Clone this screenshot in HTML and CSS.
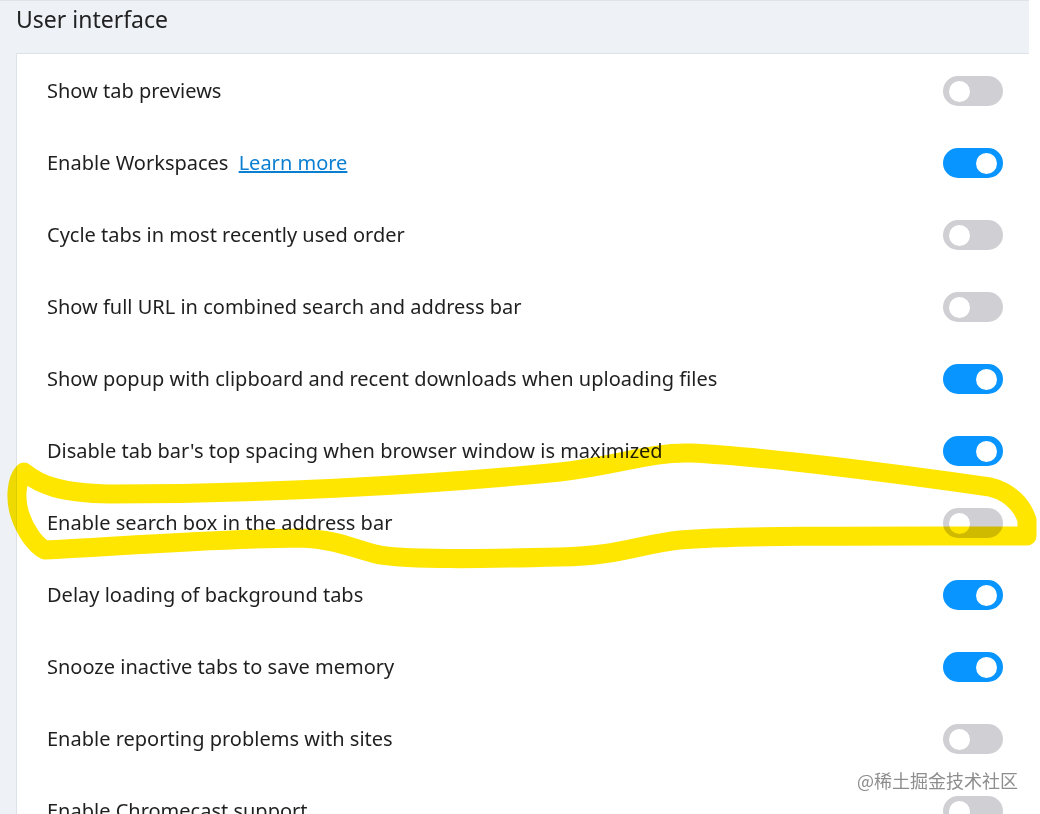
FILE: index.html
```html
<!DOCTYPE html>
<html>
<head>
<meta charset="utf-8">
<link rel="stylesheet" href="styles.css">
</head>
<body>
<div class="page">
  <div class="section">
    <h2 class="section-title">User interface</h2>
    <div class="card">
      <div class="row"><span class="label">Show tab previews</span><span class="toggle"></span></div>
      <div class="row"><span class="label">Enable Workspaces <a class="link" href="#">Learn more</a></span><span class="toggle on"></span></div>
      <div class="row"><span class="label">Cycle tabs in most recently used order</span><span class="toggle"></span></div>
      <div class="row"><span class="label">Show full URL in combined search and address bar</span><span class="toggle"></span></div>
      <div class="row"><span class="label">Show popup with clipboard and recent downloads when uploading files</span><span class="toggle on"></span></div>
      <div class="row"><span class="label">Disable tab bar's top spacing when browser window is maximized</span><span class="toggle on"></span></div>
      <div class="row"><span class="label">Enable search box in the address bar</span><span class="toggle"></span></div>
      <div class="row"><span class="label">Delay loading of background tabs</span><span class="toggle on"></span></div>
      <div class="row"><span class="label">Snooze inactive tabs to save memory</span><span class="toggle on"></span></div>
      <div class="row"><span class="label">Enable reporting problems with sites</span><span class="toggle"></span></div>
      <div class="row"><span class="label">Enable Chromecast support</span><span class="toggle"></span></div>
    </div>
  </div>
</div>
<svg class="scribble" width="1040" height="814" viewBox="0 0 1040 814">
  <path d="M 24 472 C 40 485, 60 493, 110 494 C 250 494, 420 486, 560 472 C 620 465, 650 452, 690 453 C 760 456, 900 474, 990 487 C 1010 492, 1022 505, 1027 520 L 1027 536 C 900 536, 740 535, 680 540 C 640 544, 620 556, 560 557 C 480 559, 410 560, 380 555 C 350 548, 340 540, 300 538 C 200 539, 100 548, 45 550 C 35 545, 25 530, 20 515 C 15 500, 16 480, 24 472 Z" fill="none" stroke="#ffe600" stroke-width="19" stroke-linejoin="round" stroke-linecap="round"/>
</svg>
<div class="watermark">@稀土掘金技术社区</div>
</body>
</html>
```

FILE: styles.css
```css
html, body {
  margin: 0;
  padding: 0;
  background: #ffffff;
  overflow: hidden;
  height: 814px;
}
body {
  font-family: "Noto Sans", "Open Sans", sans-serif;
  color: #1f1f1f;
  position: relative;
}
.page {
  width: 1029px;
  background: #eef2f7;
  border-top: 1px solid #dfe3e8;
  min-height: 814px;
}
.section {
  padding-left: 16px;
}
.section-title {
  margin: 0;
  height: 52px;
  font-size: 23px;
  font-weight: 400;
  line-height: 36px;
  color: #222;
}
.card {
  background: #ffffff;
  border-top: 1px solid #dde2e8;
  border-left: 1px solid #dde2e8;
  padding-top: 0;
}
.row {
  height: 72px;
  display: flex;
  align-items: center;
  justify-content: space-between;
  padding-left: 30px;
  padding-right: 26px;
}
.label {
  font-size: 20px;
}
.link {
  color: #0a7fd2;
  text-decoration: underline;
  margin-left: 5px;
}
.toggle {
  width: 60px;
  height: 30px;
  border-radius: 15px;
  background: #cfcfd4;
  position: relative;
  flex: none;
  margin-top: 2px;
}
.toggle::after {
  content: "";
  position: absolute;
  top: 4.5px;
  left: 6px;
  width: 21px;
  height: 21px;
  border-radius: 50%;
  background: #ffffff;
}
.toggle.on {
  background: #0895ff;
}
.toggle.on::after {
  left: auto;
  right: 6px;
}
.scribble {
  position: absolute;
  left: 0;
  top: 0;
  mix-blend-mode: multiply;
  pointer-events: none;
}
.watermark {
  position: absolute;
  left: 857px;
  top: 768px;
  font-family: "Noto Sans CJK SC", sans-serif;
  font-size: 18px;
  line-height: 24px;
  color: #8d8d8d;
  text-shadow: 0 0 2px #ffffff;
}
```
